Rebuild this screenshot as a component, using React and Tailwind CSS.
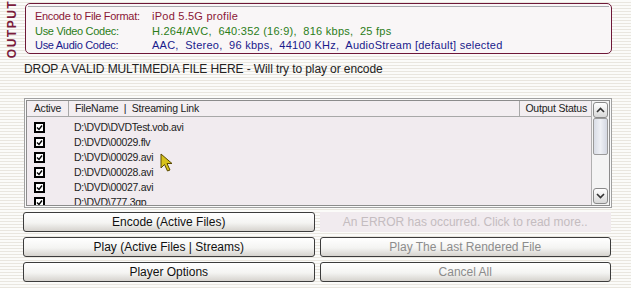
import React from 'react';

const files = [
  'D:\\DVD\\DVDTest.vob.avi',
  'D:\\DVD\\00029.flv',
  'D:\\DVD\\00029.avi',
  'D:\\DVD\\00028.avi',
  'D:\\DVD\\00027.avi',
  'D:\\DVD\\777.3gp',
];

function Check() {
  return (
    <div className="w-[11px] h-[11px] border-2 border-black bg-white flex items-center justify-center">
      <svg width="7" height="7" viewBox="0 0 7 7">
        <path d="M1 3.5 L3 5.5 L6 1.5" stroke="black" strokeWidth="1.4" fill="none" />
      </svg>
    </div>
  );
}

function Btn({ children, disabled }) {
  return (
    <button
      className={`h-[20px] rounded-[3px] border border-[#3c3c3c] bg-[linear-gradient(to_bottom,#ffffff_0%,#f4f4f2_55%,#d6d3ce_100%)] text-[12px] leading-none ${disabled ? 'text-[#8c8c8c]' : 'text-[#111]'}`}
    >
      {children}
    </button>
  );
}

function InfoRow({ label, value, color }) {
  return (
    <div className={`flex whitespace-pre ${color}`}>
      <span className="w-[117px] shrink-0 tracking-[-0.3px]">{label}</span>
      <span className="tracking-[0.25px]">{value}</span>
    </div>
  );
}

export default function App() {
  return (
    <div className="relative w-[631px] h-[288px] overflow-hidden font-['Liberation_Sans',Arial,sans-serif] bg-[repeating-linear-gradient(to_bottom,#fbfbf9_0px,#fbfbf9_2px,#e9e6df_2px,#e9e6df_3px)]">
      {/* Output panel */}
      <div className="flex pt-[3px]">
        <div className="w-[25px] h-[51px] flex items-center justify-center">
          <span className="-rotate-90 text-[12px] font-bold tracking-[1.5px] text-[#7a1c3c]">OUTPUT</span>
        </div>
        <div className="w-[587px] h-[51px] border border-[#6e1838] rounded-[5px] bg-[#f9f6f7] pt-[2px] px-[2px]">
          <div className="border-t border-[#a9a9ae] pt-[2px] pl-[7px] text-[11px] leading-[14.5px]">
            <InfoRow label="Encode to File Format:" value="iPod 5.5G profile" color="text-[#8a1636]" />
            <InfoRow label="Use Video Codec:" value="H.264/AVC,  640:352 (16:9),  816 kbps,  25 fps" color="text-[#2b7d18]" />
            <InfoRow label="Use Audio Codec:" value="AAC,  Stereo,  96 kbps,  44100 KHz,  AudioStream [default] selected" color="text-[#1a1a8c]" />
          </div>
        </div>
      </div>

      <div className="pl-[24px] pt-[8px] text-[12px] text-[#222] leading-[14px] tracking-[-0.1px]">
        DROP A VALID MULTIMEDIA FILE HERE - Will try to play or encode
      </div>

      {/* File list */}
      <div className="ml-[24px] mt-[22px] w-[588px] h-[110px] border border-[#a0a0a0] bg-[#fafafa] p-[1px]">
        <div className="flex h-full border border-[#8c8c8c] bg-[#f1ebef]">
          <div className="flex-1 flex flex-col">
            <div className="flex h-[16px] border-b border-[#a8a8a8] bg-[#f3eef1] text-[10.5px] tracking-[-0.2px] text-[#222] leading-[15px]">
              <div className="w-[42px] border-r border-[#a8a8a8] text-center">Active</div>
              <div className="flex-1 pl-[6px] whitespace-pre">FileName  |  Streaming Link</div>
              <div className="w-[72px] border-l border-[#a8a8a8] text-right pr-[4px] whitespace-nowrap">Output Status</div>
            </div>
            <div className="flex-1 overflow-hidden pt-[3px]">
              {files.map((f) => (
                <div key={f} className="flex items-center h-[15px]">
                  <div className="w-[42px] pl-[7px]">
                    <Check />
                  </div>
                  <div className="pl-[5px] text-[10.5px] tracking-[-0.3px] text-[#222]">{f}</div>
                </div>
              ))}
            </div>
          </div>
          {/* Scrollbar */}
          <div className="w-[18px] flex flex-col bg-[#f4f4f4] border-l border-[#b0b0b0] p-[1px]">
            <div className="h-[16px] rounded-[3px] border border-[#8a8a8a] bg-[linear-gradient(to_bottom,#fff,#d8d8d8)] flex items-center justify-center">
              <svg width="9" height="6" viewBox="0 0 9 6"><path d="M1 5 L4.5 1.5 L8 5" stroke="#333" strokeWidth="1.6" fill="none" /></svg>
            </div>
            <div className="h-[37px] rounded-[2px] border border-[#9a9a9a] bg-[linear-gradient(to_right,#d9dde6,#eef0f5,#d4d8e2)]" />
            <div className="flex-1" />
            <div className="h-[16px] rounded-[3px] border border-[#8a8a8a] bg-[linear-gradient(to_bottom,#fff,#d8d8d8)] flex items-center justify-center">
              <svg width="9" height="6" viewBox="0 0 9 6"><path d="M1 1 L4.5 4.5 L8 1" stroke="#333" strokeWidth="1.6" fill="none" /></svg>
            </div>
          </div>
        </div>
      </div>

      {/* Buttons */}
      <div className="ml-[23px] mt-[4px] w-[588px] grid grid-cols-2 gap-x-[5px] gap-y-[5px]">
        <Btn>Encode (Active Files)</Btn>
        <div className="h-[20px] bg-[#f1ebef] flex items-center justify-center text-[12px] text-[#c4bcc0]">
          An ERROR has occurred. Click to read more..
        </div>
        <Btn>Play (Active Files | Streams)</Btn>
        <Btn disabled>Play The Last Rendered File</Btn>
        <Btn>Player Options</Btn>
        <Btn disabled>Cancel All</Btn>
      </div>

      {/* Mouse cursor */}
      <svg className="absolute left-[160px] top-[153px]" width="14" height="20" viewBox="0 0 14 20">
        <path d="M1 1 L1 15 L4.5 11.5 L7.5 18 L10 17 L7 10.5 L12 10.5 Z" fill="#d8c21a" stroke="#5a4a00" strokeWidth="1" />
      </svg>
    </div>
  );
}
